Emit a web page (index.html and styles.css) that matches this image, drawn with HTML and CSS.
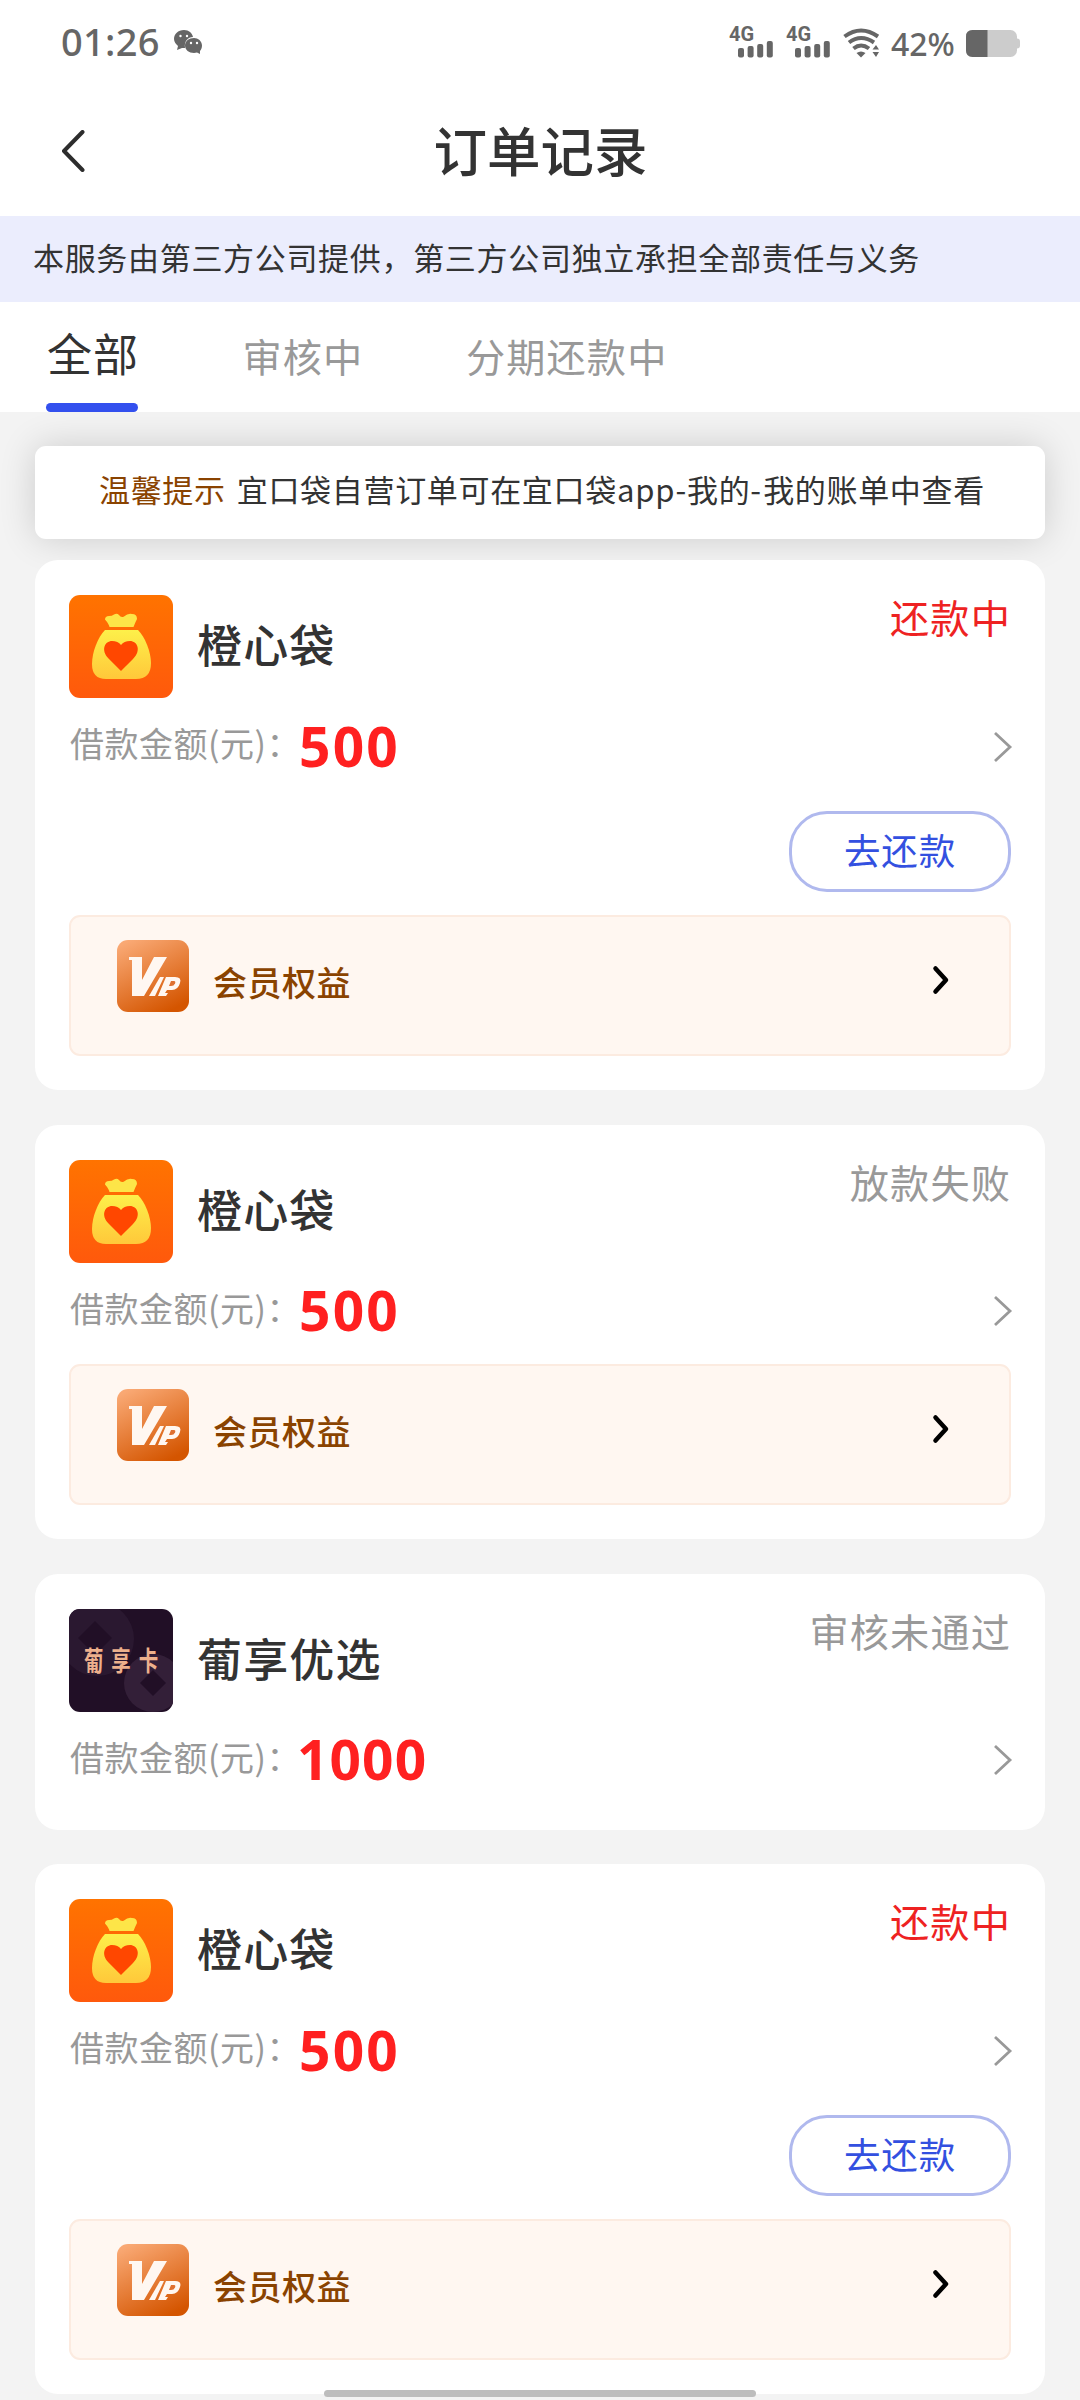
FILE: index.html
```html
<!DOCTYPE html>
<html lang="zh-CN">
<head>
<meta charset="utf-8">
<title>订单记录</title>
<link rel="stylesheet" href="styles.css">
</head>
<body>
<svg class="defs" aria-hidden="true">
  <defs>
    <linearGradient id="orange" x1="0" y1="0" x2="0" y2="1"><stop offset="0" stop-color="#ff7300"/><stop offset="1" stop-color="#ff590c"/></linearGradient>
    <linearGradient id="gold" x1="0" y1="0" x2="0" y2="1"><stop offset="0" stop-color="#fdf04a"/><stop offset="1" stop-color="#ffc83a"/></linearGradient>
    <linearGradient id="copper" x1="0.2" y1="0" x2="0.7" y2="1"><stop offset="0" stop-color="#f9a873"/><stop offset="1" stop-color="#d45500"/></linearGradient>
  </defs>
  <symbol id="bag" viewBox="0 0 104 103">
    <rect width="104" height="103" fill="url(#orange)"/>
    <path d="M36 24.500Q36 21 40 21 43 21 45 19.500 48 18 50 20 52 23 55 21.500 59 18 63 19 68 19 68 24 66 28 64.500 32H40.500Q40 29 36 24.500Z" fill="#fde548"/>
    <path d="M36 35H69C76 42 82 57 82 68Q82 84 67 84H37Q23 84 23 69C23 57 29 42 36 35Z" fill="url(#gold)"/>
    <path d="M52 76Q46 70 40 64C31 55 36 46 43 46Q49 46 52 50Q55 46 61 46C68 46 73 55 64 64Q58 70 52 76Z" fill="#ff4700"/>
  </symbol>
  <symbol id="vip" viewBox="0 0 72 72">
    <rect width="72" height="72" rx="11" fill="url(#copper)"/>
    <path d="M12 17H25L25 40 37 17H50L27 56H15V20H12Z" fill="#fff7f1"/>
    <path d="M43 37H47L38 56H32Z" fill="#fff7f1"/>
    <path d="M49 37H58Q65 37 63 43 61 50 55 50H50L48 53H51L49 56H41Z" fill="#fff7f1"/>
    <path d="M54 41H57Q59 41 58 43.500 57 46 54 46H52Z" fill="#df7030"/>
  </symbol>
  <symbol id="signal" viewBox="0 0 36 17">
    <rect x="0" y="7" width="6" height="9.500" rx="2"/><rect x="9.600" y="5" width="6" height="11.500" rx="2"/><rect x="19.200" y="3" width="6" height="13.500" rx="2"/><rect x="28.800" y="0" width="6" height="16.500" rx="2"/>
  </symbol>
  <symbol id="arrow" viewBox="0 0 20 32"><path d="M2 2 17 16 2 30" fill="none" stroke="#999" stroke-width="2.800"/></symbol>
  <symbol id="arrow-bold" viewBox="0 0 18 30"><path d="M3.500 3.500 14 15 3.500 26.500" fill="none" stroke="#000" stroke-width="4.500" stroke-linecap="round" stroke-linejoin="round"/></symbol>
</svg>

<header class="statusbar">
  <div class="status-left">
    <span class="time">01:26</span>
    <svg class="wechat" viewBox="0 0 28 24">
      <path d="M10 0C4 0 0 4 0 9c0 3 2 5 4 7l-1 4 5-2h3C10 11 14 7 19 7 18 3 15 0 10 0Z"/>
      <path d="M20 8c-5 0-9 3-9 7.500S15 23 20 23l3-.5 3 1.500v-3c1-1 2-3 2-5.500C28 11 24 8 20 8Z"/>
      <g fill="#fff"><circle cx="6.500" cy="6" r="1.200"/><circle cx="13" cy="6" r="1.200"/><circle cx="17" cy="13" r="1.200"/><circle cx="23" cy="13" r="1.200"/></g>
    </svg>
  </div>
  <div class="status-right">
    <div class="cell"><span>4G</span><svg><use href="#signal"/></svg></div>
    <div class="cell"><span>4G</span><svg><use href="#signal"/></svg></div>
    <svg class="wifi" viewBox="0 0 37 30">
      <g fill="none" stroke="#666" stroke-width="4">
        <path d="M1.500 8.500Q18 -3.500 35 8.500"/><path d="M6 14.500Q18 5.500 31 14.500"/><path d="M10.500 20.500Q18 14.500 26 20.500"/>
      </g>
      <path d="M13.500 25Q18 22 22.500 25L18 29.500Z"/><path d="M29.500 21.500 33 17 36 21.500ZM29.500 24 33 29 36 24Z"/>
    </svg>
    <span class="percent">42%</span>
    <svg class="battery" viewBox="0 0 54 27">
      <rect width="51" height="27" rx="6.500" fill="#ccc"/><path d="M51 8.500q3 0 3 3v4q0 3-3 3Z" fill="#ccc"/>
      <path d="M6.500 0H21.500V27H6.500Q0 27 0 20.500V6.500Q0 0 6.500 0Z" fill="#666"/>
    </svg>
  </div>
</header>

<nav class="titlebar">
  <svg class="back" viewBox="0 0 24 42"><path d="M21.500 2 3 21 21.500 40" fill="none" stroke="#2d2d2d" stroke-width="4" stroke-linecap="round" stroke-linejoin="round"/></svg>
  <h1>订单记录</h1>
</nav>

<p class="banner">本服务由第三方公司提供，第三方公司独立承担全部责任与义务</p>

<div class="tabs">
  <a class="tab active">全部</a>
  <a class="tab second">审核中</a>
  <a class="tab third">分期还款中</a>
</div>

<main class="orders">
  <p class="notice"><b>温馨提示</b><span>宜口袋自营订单可在宜口袋<i>app-</i>我的<i class="dash">-</i>我的账单中查看</span></p>

  <section class="card">
    <div class="head"><svg class="logo" viewBox="0 0 104 103"><use href="#bag"/></svg><h2>橙心袋</h2><span class="state due">还款中</span></div>
    <div class="amount"><span class="label">借款金额(元)：</span><strong>500</strong><svg class="more"><use href="#arrow"/></svg></div>
    <button class="repay">去还款</button>
    <div class="member"><svg class="vip"><use href="#vip"/></svg><span>会员权益</span><svg class="go"><use href="#arrow-bold"/></svg></div>
  </section>

  <section class="card">
    <div class="head"><svg class="logo" viewBox="0 0 104 103"><use href="#bag"/></svg><h2>橙心袋</h2><span class="state">放款失败</span></div>
    <div class="amount"><span class="label">借款金额(元)：</span><strong>500</strong><svg class="more"><use href="#arrow"/></svg></div>
    <div class="member"><svg class="vip"><use href="#vip"/></svg><span>会员权益</span><svg class="go"><use href="#arrow-bold"/></svg></div>
  </section>

  <section class="card plain">
    <div class="head">
      <svg class="logo" viewBox="0 0 104 103">
        <rect width="104" height="103" fill="#210f26"/>
        <circle cx="28" cy="30" r="37" fill="#2a1830"/><path d="M26 12 43 29 26 46 9 29Z" fill="#210f26"/>
        <circle cx="84" cy="74" r="29" fill="#331f38"/><path d="M84 61 97 74 84 87 71 74Z" fill="#210f26"/>
        <text class="logo-text" transform="translate(15 62) scale(0.72 1)" textLength="103" lengthAdjust="spacing">葡享卡</text>
      </svg>
      <h2>葡享优选</h2><span class="state">审核未通过</span>
    </div>
    <div class="amount"><span class="label">借款金额(元)：</span><strong class="thousand">1000</strong><svg class="more"><use href="#arrow"/></svg></div>
  </section>

  <section class="card">
    <div class="head"><svg class="logo" viewBox="0 0 104 103"><use href="#bag"/></svg><h2>橙心袋</h2><span class="state due">还款中</span></div>
    <div class="amount"><span class="label">借款金额(元)：</span><strong>500</strong><svg class="more"><use href="#arrow"/></svg></div>
    <button class="repay">去还款</button>
    <div class="member"><svg class="vip"><use href="#vip"/></svg><span>会员权益</span><svg class="go"><use href="#arrow-bold"/></svg></div>
  </section>
</main>
<div class="home-indicator"></div>
</body>
</html>
```
FILE: styles.css
```css
* { box-sizing: border-box; margin: 0; padding: 0; }
body {
  width: 1080px;
  height: 2400px;
  overflow: hidden;
  position: relative;
  background: #f3f3f3;
  color: #333;
  font-family: "Noto Sans CJK SC", sans-serif;
}
svg { display: block; flex: none; }
.defs { position: absolute; width: 0; height: 0; }

.statusbar {
  height: 84px;
  padding: 0 60px 0 61px;
  display: flex;
  justify-content: space-between;
  background: #fff;
  color: #666;
  fill: #666;
  font-family: "Noto Sans", sans-serif;
}
.status-left, .status-right { display: flex; }
.time { font-size: 38px; font-weight: 500; line-height: 82px; letter-spacing: 0.300px; width: 113px; }
.wechat { width: 28px; height: 24px; margin-top: 30px; }
.cell { width: 57px; height: 58px; padding-top: 24px; }
.cell span { display: block; height: 17px; font: 700 20px/20px Roboto, sans-serif; }
.cell svg { width: 36px; height: 17px; margin-left: 9px; }
.wifi { width: 37px; height: 30px; margin-top: 28px; }
.percent { width: 86px; padding-left: 11px; font-size: 32px; font-weight: 500; line-height: 88px; }
.battery { width: 54px; height: 27px; margin-top: 30px; }

.titlebar {
  height: 132px;
  padding: 0 84px 0 61px;
  display: flex;
  align-items: center;
  background: #fff;
}
.back { width: 24px; height: 42px; margin-top: 2px; }
.titlebar h1 { flex: 1; text-align: center; font-size: 53.500px; font-weight: 500; line-height: 130px; height: 132px; }

.banner { height: 86px; padding-left: 33px; background: #ebedfd; font-size: 31px; letter-spacing: 0.680px; line-height: 82px; }

.tabs { height: 110px; padding-left: 46px; display: flex; background: #fff; color: #999; font-size: 39.200px; letter-spacing: 1.120px; line-height: 106px; }
.active { width: 92px; padding-left: 1px; color: #333; font-size: 45px; letter-spacing: 1px; line-height: 101px; display: flex; flex-direction: column; white-space: nowrap; }
.active::after { content: ""; width: 92px; height: 9px; margin-left: -1px; background: #3350ee; border-radius: 4.500px; }
.second { margin-left: 104.500px; }
.third { margin-left: 102.500px; }

.orders { height: 1988px; padding: 34px 35px 0; overflow: hidden; display: flex; flex-direction: column; gap: 34.800px; }
.notice {
  flex: none;
  height: 93px;
  margin-bottom: -13.800px;
  padding-left: 64px;
  display: flex;
  gap: 11px;
  background: #fff;
  border-radius: 11px;
  box-shadow: 0 0 36px rgba(0, 0, 0, 0.16);
  font-size: 31px;
  letter-spacing: 0.680px;
  line-height: 86px;
}
.notice b { font-weight: 400; color: #8a4300; }
.notice i { font-style: normal; letter-spacing: 0.800px; }
.notice .dash { letter-spacing: 2px; }

.card { flex: none; padding: 35px 34px 34px; background: #fff; border-radius: 23px; }
.head { height: 103px; display: flex; }
.logo { width: 104px; height: 103px; border-radius: 11px; overflow: hidden; }
.logo-text { font: 700 27px "Noto Sans CJK SC", sans-serif; fill: #edb08c; }
.head h2 { flex: 1; padding-left: 24px; font-size: 45px; letter-spacing: 1.150px; font-weight: 500; line-height: 97px; }
.state { color: #999; font-size: 39.200px; letter-spacing: 1.120px; line-height: 42px; }
.due { color: #ee2222; }
.amount { height: 101px; display: flex; align-items: center; }
.label { width: 230px; padding-left: 1px; white-space: nowrap; color: #999; font-size: 34px; letter-spacing: 0.500px; line-height: 60px; margin-top: -11px; }
.amount strong { flex: 1; color: #ff2020; font: 700 55px/60px "Noto Sans", sans-serif; letter-spacing: 2.200px; margin-top: -6px; }
.amount .thousand { margin-left: -2px; letter-spacing: 1.100px; }
.more { width: 20px; height: 32px; margin: -4px -2px 0 0; }
.repay {
  display: block;
  width: 222px;
  height: 81px;
  margin: 12px 0 23px auto;
  border: 3px solid #b0b9ee;
  border-radius: 38px;
  background: #fff;
  color: #3350e0;
  font: 400 36.500px/69px "Noto Sans CJK SC", sans-serif;
  letter-spacing: 0.900px;
  padding-bottom: 4px;
}
.member {
  height: 141px;
  padding: 23px 59px 0 46px;
  display: flex;
  background: #fff7f1;
  border: 2px solid #fcebe0;
  border-radius: 11px;
}
.vip { width: 72px; height: 72px; }
.member span { flex: 1; padding-left: 24px; color: #8a4300; font-size: 34px; letter-spacing: 0.500px; font-weight: 500; line-height: 84px; }
.go { width: 18px; height: 30px; margin-top: 25px; }
.plain { padding-bottom: 17px; }

.home-indicator { position: absolute; left: 324px; top: 2390px; width: 432px; height: 7px; border-radius: 4px; background: #bdbdbd; }
```
